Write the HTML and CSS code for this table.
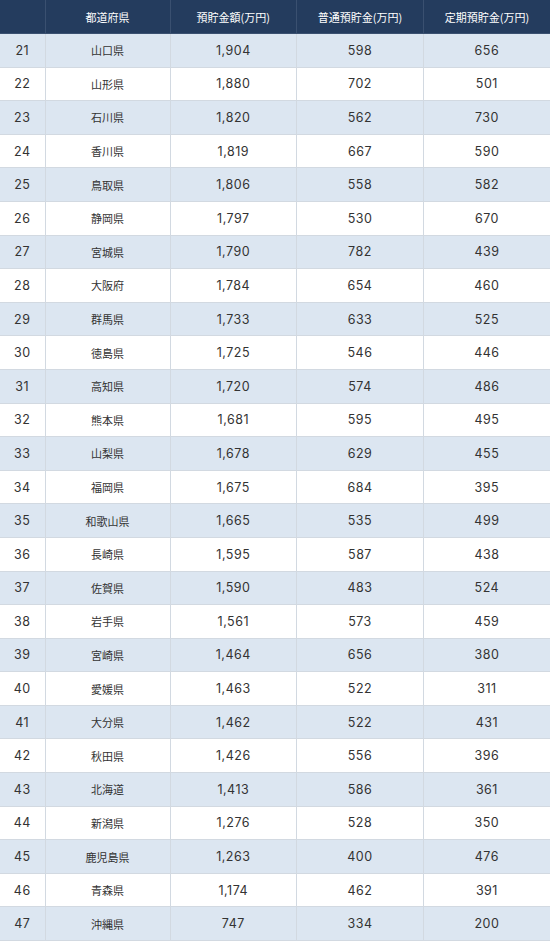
FILE: index.html
```html
<!DOCTYPE html>
<html lang="ja">
<head>
<meta charset="utf-8">
<link rel="stylesheet" href="styles.css">
</head>
<body>
<table class="tbl">
<colgroup><col class="c-rank"><col class="c-pref"><col><col><col></colgroup>
<thead>
<tr><th></th><th>都道府県</th><th>預貯金額(万円)</th><th>普通預貯金(万円)</th><th>定期預貯金(万円)</th></tr>
</thead>
<tbody>
<tr><td>21</td><td class="ja">山口県</td><td>1,904</td><td>598</td><td>656</td></tr>
<tr><td>22</td><td class="ja">山形県</td><td>1,880</td><td>702</td><td>501</td></tr>
<tr><td>23</td><td class="ja">石川県</td><td>1,820</td><td>562</td><td>730</td></tr>
<tr><td>24</td><td class="ja">香川県</td><td>1,819</td><td>667</td><td>590</td></tr>
<tr><td>25</td><td class="ja">鳥取県</td><td>1,806</td><td>558</td><td>582</td></tr>
<tr><td>26</td><td class="ja">静岡県</td><td>1,797</td><td>530</td><td>670</td></tr>
<tr><td>27</td><td class="ja">宮城県</td><td>1,790</td><td>782</td><td>439</td></tr>
<tr><td>28</td><td class="ja">大阪府</td><td>1,784</td><td>654</td><td>460</td></tr>
<tr><td>29</td><td class="ja">群馬県</td><td>1,733</td><td>633</td><td>525</td></tr>
<tr><td>30</td><td class="ja">徳島県</td><td>1,725</td><td>546</td><td>446</td></tr>
<tr><td>31</td><td class="ja">高知県</td><td>1,720</td><td>574</td><td>486</td></tr>
<tr><td>32</td><td class="ja">熊本県</td><td>1,681</td><td>595</td><td>495</td></tr>
<tr><td>33</td><td class="ja">山梨県</td><td>1,678</td><td>629</td><td>455</td></tr>
<tr><td>34</td><td class="ja">福岡県</td><td>1,675</td><td>684</td><td>395</td></tr>
<tr><td>35</td><td class="ja">和歌山県</td><td>1,665</td><td>535</td><td>499</td></tr>
<tr><td>36</td><td class="ja">長崎県</td><td>1,595</td><td>587</td><td>438</td></tr>
<tr><td>37</td><td class="ja">佐賀県</td><td>1,590</td><td>483</td><td>524</td></tr>
<tr><td>38</td><td class="ja">岩手県</td><td>1,561</td><td>573</td><td>459</td></tr>
<tr><td>39</td><td class="ja">宮崎県</td><td>1,464</td><td>656</td><td>380</td></tr>
<tr><td>40</td><td class="ja">愛媛県</td><td>1,463</td><td>522</td><td>311</td></tr>
<tr><td>41</td><td class="ja">大分県</td><td>1,462</td><td>522</td><td>431</td></tr>
<tr><td>42</td><td class="ja">秋田県</td><td>1,426</td><td>556</td><td>396</td></tr>
<tr><td>43</td><td class="ja">北海道</td><td>1,413</td><td>586</td><td>361</td></tr>
<tr><td>44</td><td class="ja">新潟県</td><td>1,276</td><td>528</td><td>350</td></tr>
<tr><td>45</td><td class="ja">鹿児島県</td><td>1,263</td><td>400</td><td>476</td></tr>
<tr><td>46</td><td class="ja">青森県</td><td>1,174</td><td>462</td><td>391</td></tr>
<tr><td>47</td><td class="ja">沖縄県</td><td>747</td><td>334</td><td>200</td></tr>
</tbody>
</table>
</body>
</html>
```
FILE: styles.css
```css
html, body {
  margin: 0;
  padding: 0;
  background: #ffffff;
}
.tbl {
  width: 550px;
  border-collapse: collapse;
  table-layout: fixed;
  font-family: Inter, "Noto Sans CJK JP", sans-serif;
  font-size: 12.5px;
  letter-spacing: 0.04em;
  color: #333333;
}
.c-rank { width: 45px; }
.c-pref { width: 125px; }
.tbl th {
  background: #243c5e;
  color: #ffffff;
  font-family: "Noto Sans CJK JP", sans-serif;
  font-weight: normal;
  font-size: 11px;
  letter-spacing: 0;
  height: 33px;
  padding: 0;
  text-align: center;
  border: 1px solid #3a5070;
  border-top: none;
}
.tbl th:first-child { border-left: none; }
.tbl th:last-child { border-right: none; }
.tbl td {
  height: 32.6px;
  padding: 0;
  text-align: center;
  border: 1px solid #d2d9e1;
}
.tbl td:first-child { border-left: none; }
.tbl td:last-child { border-right: none; }
.tbl tbody tr:nth-child(odd) td { background: #dce6f1; }
.tbl td.ja {
  font-family: "Noto Sans CJK JP", sans-serif;
  font-size: 11px;
  letter-spacing: 0;
}
```
